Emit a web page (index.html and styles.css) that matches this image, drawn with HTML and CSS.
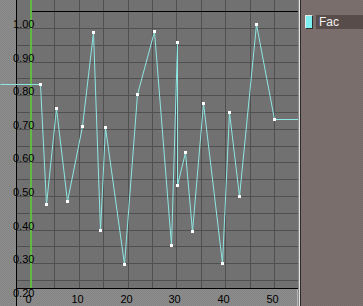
FILE: index.html
```html
<!DOCTYPE html>
<html lang="en">
<head>
  <meta charset="UTF-8">
  <title>Ipo Curve Editor</title>
  <link rel="stylesheet" href="styles.css">
</head>
<body>
  <div class="window">
    <div class="ipo">
      <svg class="graph" width="298" height="306" viewBox="0 0 298 306">
        <defs>
          <pattern id="dither" width="2" height="2" patternUnits="userSpaceOnUse">
            <rect width="2" height="2" fill="#8c8c8c"/>
            <rect width="1" height="1" fill="#858585"/>
            <rect x="1" y="1" width="1" height="1" fill="#858585"/>
          </pattern>
        </defs>

        <!-- value scale strip -->
        <rect x="0" y="0" width="16" height="306" fill="url(#dither)"/>
        <!-- plot -->
        <rect x="17" y="0" width="281" height="288" fill="#717171"/>

        <g id="grid" stroke="#505050" stroke-width="1"></g>

        <!-- frame scale -->
        <rect x="17" y="289" width="280" height="17" fill="url(#dither)"/>
        <line x1="297.5" y1="289" x2="297.5" y2="306" stroke="#b4b4b4"/>
        <line x1="16" y1="288.5" x2="298" y2="288.5" stroke="#000"/>
        <line x1="16.5" y1="0" x2="16.5" y2="306" stroke="#000"/>

        <line x1="31" y1="11.5" x2="298" y2="11.5" stroke="#000"/>
        <rect x="30" y="0" width="2" height="288" fill="#62b845"/>

        <g id="labels" class="labels"></g>

        <polyline id="curve" fill="none" stroke="#8ee6e2" stroke-width="1"/>
        <g id="keys" fill="#ffffff"></g>
      </svg>
    </div>
    <div class="divider"></div>
    <div class="channels">
      <div class="channel">
        <span class="swatch"></span>
        <span class="name">Fac</span>
      </div>
    </div>
  </div>

  <script>
    const NS = "http://www.w3.org/2000/svg";
    const grid = document.getElementById("grid");
    const labels = document.getElementById("labels");

    // horizontal lines every 0.05, 1.00 sits at y=28
    for (let k = 0; k <= 16; k++) {
      const y = Math.round(28 + k * 16.8) + 0.5;
      const l = document.createElementNS(NS, "line");
      l.setAttribute("x1", 17); l.setAttribute("x2", 298);
      l.setAttribute("y1", y); l.setAttribute("y2", y);
      grid.appendChild(l);
      if (k % 2 === 0) {
        const t = document.createElementNS(NS, "text");
        t.setAttribute("x", 13);
        t.setAttribute("y", Math.round(28 + k * 16.8));
        t.textContent = (1 - k * 0.05).toFixed(2);
        labels.appendChild(t);
      }
    }

    // vertical lines every 5 frames
    for (let k = 0; k <= 11; k++) {
      const x = Math.round(30 + k * 24.4) + 0.5;
      const l = document.createElementNS(NS, "line");
      l.setAttribute("x1", x); l.setAttribute("x2", x);
      l.setAttribute("y1", 0); l.setAttribute("y2", 288);
      grid.appendChild(l);
      if (k % 2 === 0) {
        const t = document.createElementNS(NS, "text");
        t.setAttribute("x", x - 2);
        t.setAttribute("y", 303);
        t.setAttribute("text-anchor", "middle");
        t.textContent = k * 5;
        labels.appendChild(t);
      }
    }

    const keys = [
      [40, 84], [46, 204], [56, 108], [67, 201], [82, 126], [93, 32],
      [100, 230], [105, 127], [124, 264], [137, 94], [154, 31], [171, 245],
      [177, 42], [177, 185], [185, 152], [192, 231], [203, 103], [222, 263],
      [229, 112], [239, 196], [256, 24], [274, 119]
    ];

    const pts = [[0, 84], ...keys, [298, 119]];
    document.getElementById("curve").setAttribute("points",
      pts.map(p => (p[0] + 0.5) + "," + (p[1] + 0.5)).join(" "));

    const keyGroup = document.getElementById("keys");
    keys.forEach(p => {
      const r = document.createElementNS(NS, "rect");
      r.setAttribute("x", p[0] - 1); r.setAttribute("y", p[1] - 1);
      r.setAttribute("width", 3); r.setAttribute("height", 3);
      keyGroup.appendChild(r);
    });
  </script>
</body>
</html>
```

FILE: styles.css
```css
body {
  margin: 0;
  background-color: #7b6f6d;
  font-family: "Liberation Sans", Arial, sans-serif;
}
.window {
  display: flex;
  width: 363px;
  height: 306px;
  overflow: hidden;
}
.ipo {
  width: 298px;
  flex-shrink: 0;
}
.graph {
  display: block;
}
.labels text {
  font-family: "Liberation Sans", Arial, sans-serif;
  font-size: 11px;
  fill: #000;
}
.divider {
  width: 1px;
  background: #e4e4e4;
  border-left: 1px solid #8a8a8a;
  border-right: 1px solid #2a2a2a;
}
.channels {
  flex: 1;
  padding-top: 15px;
  background: repeating-conic-gradient(#7d7170 0 25%, #776b69 0 50%) 0 0 / 2px 2px;
}
.channel {
  display: flex;
  align-items: stretch;
  height: 14px;
  gap: 3px;
}
.swatch {
  width: 6px;
  margin-left: 4px;
  background: #7ff0f0;
  border: 1px solid #e6e6e6;
  border-right-color: #2e2e2e;
  border-bottom-color: #2e2e2e;
}
.name {
  flex: 1;
  background: #574c4a;
  color: #f2f2f2;
  font-size: 12px;
  line-height: 15px;
  padding-left: 3px;
}
```
